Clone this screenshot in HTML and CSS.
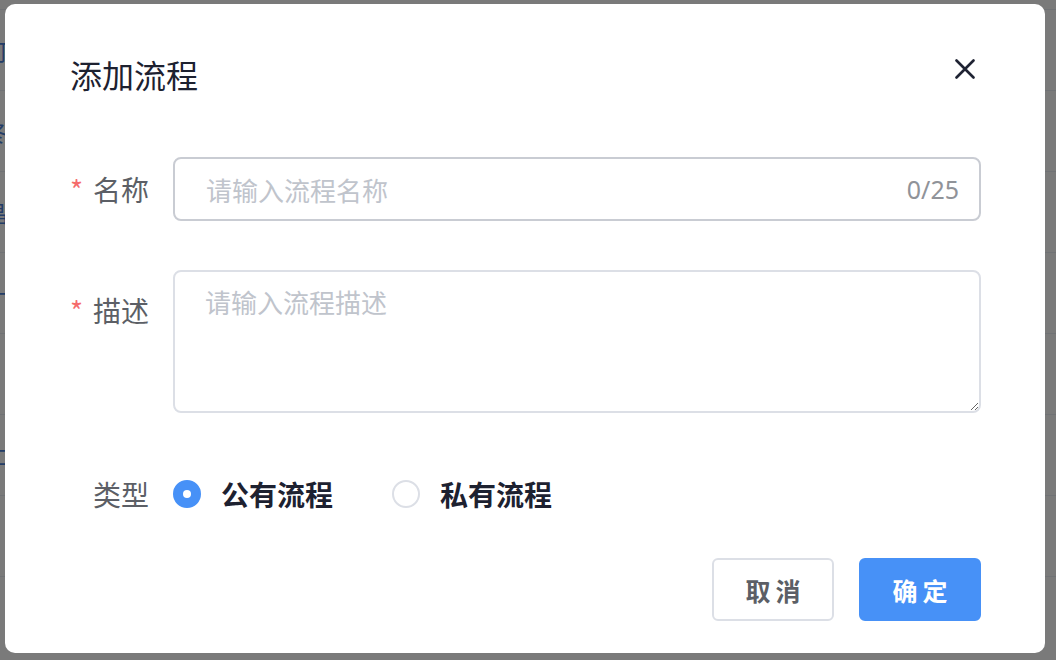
FILE: index.html
```html
<!DOCTYPE html>
<html lang="zh-CN">
<head>
  <meta charset="UTF-8" />
  <meta name="viewport" content="width=device-width, initial-scale=1.0"/>
  <title>添加流程</title>
  <link rel="stylesheet" href="styles.css">
</head>
<body>
  <!-- page behind the dialog -->
  <div class="page">
    <div class="row"><span class="cell">可</span></div>
    <div class="row"><span class="cell">冬</span></div>
    <div class="row"><span class="cell">晶</span></div>
    <div class="row"><span class="cell">十</span></div>
    <div class="row"><span class="cell"></span></div>
    <div class="row"><span class="cell">二</span></div>
    <div class="row"><span class="cell"></span></div>
    <div class="row"><span class="cell"></span></div>
  </div>

  <!-- Add Flow Dialog -->
  <div class="mask">
    <div class="dialog">
      <div class="dialog-header">
        <span class="dialog-title">添加流程</span>
        <button class="close-btn" type="button" aria-label="关闭">
          <svg width="20" height="20" viewBox="0 0 20 20">
            <path d="M1.5 1.5 L18.5 18.5 M18.5 1.5 L1.5 18.5" stroke="#1f2333" stroke-width="2.6" stroke-linecap="round" fill="none"/>
          </svg>
        </button>
      </div>

      <form class="flow-form">
        <div class="form-item">
          <label class="form-label required" for="name">名称</label>
          <div class="input-box">
            <input type="text" id="name" maxlength="25" placeholder="请输入流程名称" />
            <span class="counter">0/25</span>
          </div>
        </div>

        <div class="form-item item-desc">
          <label class="form-label required" for="desc">描述</label>
          <textarea id="desc" placeholder="请输入流程描述"></textarea>
        </div>

        <div class="form-item item-type">
          <span class="form-label">类型</span>
          <div class="radio-group">
            <label class="radio checked"><span class="radio-dot"></span><span class="radio-text">公有流程</span></label>
            <label class="radio"><span class="radio-dot"></span><span class="radio-text">私有流程</span></label>
          </div>
        </div>
      </form>

      <div class="dialog-footer">
        <button type="button" class="btn btn-cancel">取消</button>
        <button type="button" class="btn btn-primary">确定</button>
      </div>
    </div>
  </div>
</body>
</html>
```

FILE: styles.css
```css
body {
  margin: 0;
  font-family: "Noto Sans CJK SC", "Noto Sans", sans-serif;
  background: #fff;
  overflow: hidden;
}

.page {
  padding-top: 9px;
}

.row {
  height: 80px;
  border-top: 1px solid #ebeef5;
  display: flex;
  align-items: center;
}

.cell {
  margin-left: -14px;
  font-size: 22px;
  color: #4a7fd8;
}

.mask {
  position: fixed;
  inset: 0;
  background: rgba(0, 0, 0, 0.52);
  display: flex;
  padding: 4px 11px 7px 5px;
}

.dialog {
  flex: 1;
  background: #fff;
  border-radius: 10px;
  padding: 50px 64px 32px 65px;
  display: flex;
  flex-direction: column;
}

.dialog-header {
  display: flex;
  justify-content: space-between;
  align-items: center;
  height: 40px;
}

.dialog-title {
  font-size: 32px;
  line-height: 40px;
  font-weight: 400;
  color: #1d2130;
}

.close-btn {
  border: none;
  background: none;
  padding: 0;
  margin: -10px 6px 0 0;
  width: 20px;
  height: 20px;
  display: flex;
  cursor: pointer;
}

.flow-form {
  margin-top: 63px;
}

.form-item {
  display: flex;
  align-items: flex-start;
  margin-bottom: 49px;
}

.form-label {
  width: 103px;
  padding-right: 24px;
  box-sizing: border-box;
  text-align: right;
  white-space: nowrap;
  flex-shrink: 0;
  font-size: 28px;
  line-height: 64px;
  color: #5c5f66;
}

.form-label.required::before {
  content: "*";
  color: #f56c6c;
  margin-right: 10px;
}

.input-box {
  flex: 1;
  height: 64px;
  border: 2px solid #c9ccd3;
  border-radius: 8px;
  box-sizing: border-box;
  display: flex;
  align-items: center;
  padding: 0 20px 0 31px;
}

.input-box input {
  flex: 1;
  border: none;
  outline: none;
  padding: 0;
  font-family: inherit;
  font-size: 26px;
  color: #303133;
  background: none;
}

.input-box input::placeholder,
textarea::placeholder {
  color: #c0c4cc;
}

.counter {
  font-family: "Noto Sans", sans-serif;
  font-size: 25px;
  color: #909399;
}

.item-desc .form-label {
  line-height: 40px;
  padding-top: 20px;
}

textarea {
  flex: 1;
  height: 143px;
  box-sizing: border-box;
  border: 2px solid #dcdfe6;
  border-radius: 8px;
  padding: 10px 30px;
  font-family: inherit;
  font-size: 26px;
  line-height: 40px;
  outline: none;
  color: #303133;
}

.item-type {
  margin-top: 61px;
  margin-bottom: 0;
  align-items: center;
}

.item-type .form-label {
  line-height: 40px;
}

.radio-group {
  display: flex;
  align-items: center;
  gap: 59px;
}

.radio {
  display: flex;
  align-items: center;
  gap: 20px;
  cursor: pointer;
}

.radio-dot {
  width: 28px;
  height: 28px;
  border-radius: 50%;
  border: 2px solid #dcdfe6;
  box-sizing: border-box;
  display: flex;
  align-items: center;
  justify-content: center;
}

.radio.checked .radio-dot {
  background: #4791f7;
  border-color: #4791f7;
}

.radio.checked .radio-dot::after {
  content: "";
  width: 8px;
  height: 8px;
  border-radius: 50%;
  background: #fff;
}

.radio-text {
  font-size: 28px;
  line-height: 40px;
  font-weight: 700;
  color: #1d2130;
}

.dialog-footer {
  margin-top: auto;
  display: flex;
  justify-content: flex-end;
  gap: 25px;
}

.btn {
  width: 122px;
  height: 63px;
  border-radius: 6px;
  font-family: inherit;
  font-size: 25px;
  font-weight: 700;
  letter-spacing: 5px;
  text-indent: 5px;
  cursor: pointer;
}

.btn-cancel {
  background: #fff;
  border: 2px solid #dcdfe6;
  color: #5c5f66;
}

.btn-primary {
  background: #4791f7;
  border: 2px solid #4791f7;
  color: #fff;
}
```
